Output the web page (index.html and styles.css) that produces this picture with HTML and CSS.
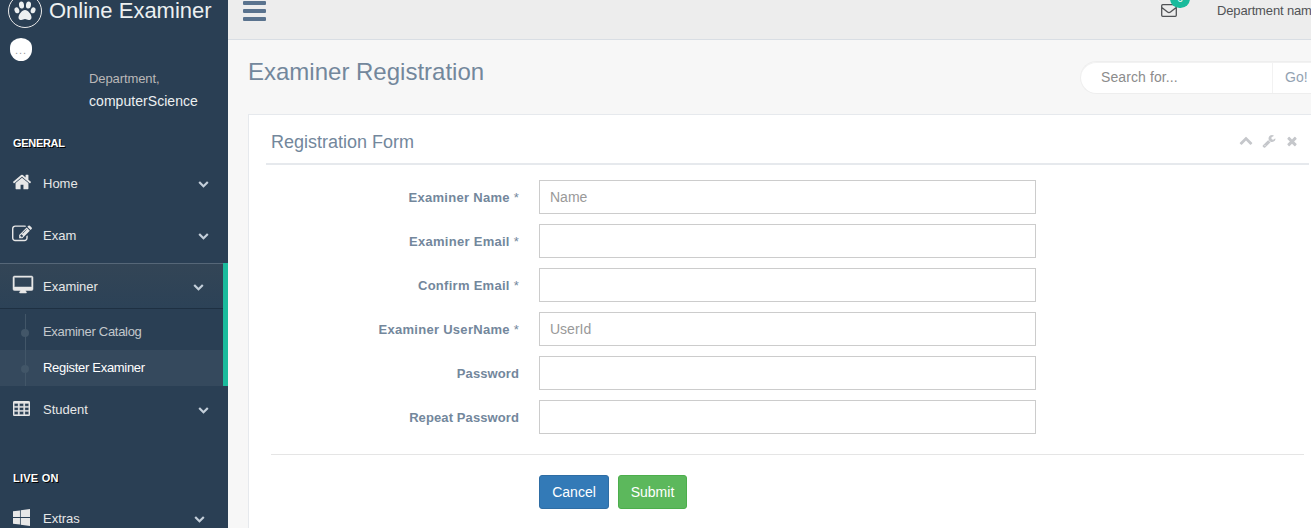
FILE: index.html
```html
<!DOCTYPE html>
<html lang="en">
<head>
<meta charset="utf-8">
<title>Online Examiner</title>
<link rel="stylesheet" href="styles.css">
</head>
<body>
<svg class="defs" aria-hidden="true">
  <symbol id="chevron" viewBox="0 0 1792 1792"><path d="M1683 808l-742 741q-19 19-45 19t-45-19l-742-741q-19-19-19-45.500t19-45.500l166-165q19-19 45-19t45 19l531 531 531-531q19-19 45-19t45 19l166 165q19 19 19 45.500t-19 45.500z"/></symbol>
</svg>
<div class="app">
  <aside class="sidebar">
    <div class="brand">
      <span class="brand-icon"><svg viewBox="0 0 22 20"><ellipse cx="7.500" cy="4" rx="2.500" ry="3.600" transform="rotate(-8 7.500 4)"/><ellipse cx="14.500" cy="4" rx="2.500" ry="3.600" transform="rotate(8 14.500 4)"/><ellipse cx="2.900" cy="9.300" rx="2.300" ry="3.100" transform="rotate(-22 2.900 9.300)"/><ellipse cx="19.100" cy="9.300" rx="2.300" ry="3.100" transform="rotate(22 19.100 9.300)"/><path d="M11 9c-3 0-6.500 4.500-6.500 7.500 0 2 1.500 2.500 2.800 2.500 1.500 0 2.400-.9 3.700-.9s2.200.9 3.700.9c1.300 0 2.800-.5 2.800-2.500C17.500 13.500 14 9 11 9z"/></svg></span>
      <span class="brand-name">Online Examiner</span>
    </div>
    <div class="profile">
      <span class="avatar">...</span>
      <div class="profile-info">
        <span>Department,</span>
        <strong>computerScience</strong>
      </div>
    </div>
    <h3 class="section-title">GENERAL</h3>
    <nav class="menu">
      <a class="item"><svg class="icon" viewBox="0 0 1792 1792"><path d="M1472 992v480q0 26-19 45t-45 19h-384v-384h-256v384h-384q-26 0-45-19t-19-45v-480q0-1 .5-3t.5-3l575-474 575 474q1 2 1 6zm223-69l-62 74q-8 9-21 11h-3q-13 0-21-7l-692-577-692 577q-12 8-24 7-13-2-21-11l-62-74q-8-10-7-23.500t11-21.500l719-599q32-26 76-26t76 26l244 204v-195q0-14 9-23t23-9h192q14 0 23 9t9 23v408l219 182q10 8 11 21.500t-7 23.500z"/></svg><span>Home</span><svg class="chev"><use href="#chevron"/></svg></a>
      <a class="item"><svg class="icon" viewBox="0 0 1792 1792"><path d="M888 1184l116-116-152-152-116 116v56h96v96h56zm440-720q-16-16-33 1l-350 350q-17 17-1 33t33-1l350-350q17-17 1-33zm80 594v190q0 119-84.500 203.500t-203.500 84.500h-832q-119 0-203.500-84.500t-84.500-203.500v-832q0-119 84.500-203.500t203.500-84.500h832q63 0 117 25 15 7 18 23 3 17-9 29l-49 49q-14 14-32 8-23-6-45-6h-832q-66 0-113 47t-47 113v832q0 66 47 113t113 47h832q66 0 113-47t47-113v-126q0-13 9-22l64-64q15-15 35-7t20 29zm-96-738l288 288-672 672h-288v-288zm444 132l-92 92-288-288 92-92q28-28 68-28t68 28l152 152q28 28 28 68t-28 68z"/></svg><span>Exam</span><svg class="chev"><use href="#chevron"/></svg></a>
      <div class="group">
        <a class="item open"><svg class="icon desktop" viewBox="0 0 20 18"><path fill-rule="evenodd" d="M1.500 0h17Q20 0 20 1.500v11.500q0 1.500-1.500 1.500H12.700q0 1 .8 1.700.3.800-.6.800H7.100q-.9 0-.6-.8.800-.7.800-1.700H1.500Q0 14.500 0 13V1.500Q0 0 1.500 0zM1.800 1.300q-.5 0-.5.500v8.700q0 .5.500.5h16.400q.5 0 .5-.5V1.800q0-.5-.5-.5z"/></svg><span>Examiner</span><svg class="chev"><use href="#chevron"/></svg></a>
        <ul class="submenu">
          <li>Examiner Catalog</li>
          <li class="current">Register Examiner</li>
        </ul>
      </div>
      <a class="item student"><svg class="icon table" viewBox="0 0 17 15"><path fill-rule="evenodd" d="M1.500 0h14Q17 0 17 1.500v12q0 1.500-1.500 1.500h-14Q0 15 0 13.500v-12Q0 0 1.500 0zM1.300 2.500v2.700h3.800V2.500zm5.200 0v2.700h4V2.500zm5.400 0v2.700h3.800V2.500zM1.300 6.500v2.800h3.800V6.500zm5.200 0v2.800h4V6.500zm5.400 0v2.800h3.800V6.500zM1.300 10.600v2.800h3.800v-2.800zm5.200 0v2.800h4v-2.800zm5.400 0v2.800h3.800v-2.800z"/></svg><span>Student</span><svg class="chev"><use href="#chevron"/></svg></a>
    </nav>
    <h3 class="section-title live">LIVE ON</h3>
    <nav class="menu">
      <a class="item extras"><svg class="icon windows" viewBox="64 128 1664 1664"><path d="M746 1006v651l-682-94v-557h682zm0-743v659h-682v-565zm982 743v786l-907-125v-661h907zm0-878v794h-907v-669z"/></svg><span>Extras</span><svg class="chev"><use href="#chevron"/></svg></a>
    </nav>
  </aside>
  <main class="content">
    <header class="topbar">
      <span class="burger"><i></i><i></i><i></i></span>
      <span class="mail"><svg viewBox="0 0 16 13"><path d="M1.700.7h12.600q1 0 1 1v9.600q0 1-1 1H1.700q-1 0-1-1V1.700q0-1 1-1zM.8 3.500L6.500 8Q8 9.200 9.500 8l5.700-4.500"/></svg><b class="badge">6</b></span>
      <span class="user">Department name</span>
    </header>
    <div class="page-head">
      <h1>Examiner Registration</h1>
      <div class="search"><span class="query">Search for...</span><span class="go">Go!</span></div>
    </div>
    <section class="panel">
      <div class="panel-head">
        <h2>Registration Form</h2>
        <span class="tools">
          <svg class="collapse"><use href="#chevron"/></svg>
          <svg viewBox="0 0 1792 1792"><path d="M448 1472q0-26-19-45t-45-19-45 19-19 45 19 45 45 19 45-19 19-45zm644-420l-682 682q-37 37-90 37-52 0-91-37l-106-108q-38-36-38-90 0-53 38-91l681-681q39 98 114.500 173.500t173.500 114.500zm634-435q0 39-23 106-47 134-164.500 217.500t-258.500 83.500q-185 0-316.500-131.500t-131.500-316.500 131.500-316.500 316.500-131.500q58 0 121.500 16.500t107.500 46.500q16 11 16 28t-16 28l-293 169v224l193 107q5-3 79-48.500t135.500-81 70.500-35.500q15 0 23.500 10t8.500 25z"/></svg>
          <svg viewBox="0 0 1792 1792"><path d="M1490 1322q0 40-28 68l-136 136q-28 28-68 28t-68-28l-294-294-294 294q-28 28-68 28t-68-28l-136-136q-28-28-28-68t28-68l294-294-294-294q-28-28-28-68t28-68l136-136q28-28 68-28t68 28l294 294 294-294q28-28 68-28t68 28l136 136q28 28 28 68t-28 68l-294 294 294 294q28 28 28 68z"/></svg>
        </span>
      </div>
      <form class="form">
        <label class="required" for="name">Examiner Name <em>*</em></label><input id="name" type="text" placeholder="Name">
        <label class="required" for="email">Examiner Email <em>*</em></label><input id="email" type="text">
        <label class="required" for="email2">Confirm Email <em>*</em></label><input id="email2" type="text">
        <label class="required" for="userid">Examiner UserName <em>*</em></label><input id="userid" type="text" placeholder="UserId">
        <label for="pass">Password</label><input id="pass" type="password">
        <label for="pass2">Repeat Password</label><input id="pass2" type="password">
      </form>
      <div class="actions"><button class="btn cancel" type="button">Cancel</button><button class="btn submit" type="button">Submit</button></div>
    </section>
  </main>
</div>
</body>
</html>
```
FILE: styles.css
```css
* { box-sizing: border-box; }
html, body { margin: 0; height: 528px; overflow: hidden; }
body { font: 13px/18px "Liberation Sans", Arial, sans-serif; color: #73879c; background: #f7f7f7; }
h1, h2, h3, ul { margin: 0; padding: 0; font-weight: normal; list-style: none; }
svg { display: block; fill: currentColor; flex: none; }
.defs { display: none; }
.app { display: flex; height: 528px; }

.sidebar { width: 228px; flex: none; background: #2a3f54; color: #e7e7e7; overflow: hidden; }
.brand { display: flex; align-items: center; height: 34px; margin-top: -6px; padding-left: 8px; gap: 7px; color: #ecf0f1; }
.brand-icon { width: 34px; height: 34px; border: 1px solid #eaeaea; border-radius: 50%; display: grid; place-items: center; flex: none; }
.brand-icon svg { width: 22px; height: 20px; }
.brand-name { font-size: 22px; line-height: 22px; white-space: nowrap; }
.profile { height: 101px; padding: 10px 0 0 10px; display: flex; }
.avatar { width: 22px; height: 23px; border-radius: 50% / 42% 42% 50% 50%; background: #fff; color: #999; font-size: 11px; line-height: 24px; text-align: center; letter-spacing: 1px; flex: none; }
.profile-info { padding: 32px 0 0 57px; display: flex; flex-direction: column; }
.profile-info span { color: #bab8b8; line-height: 18px; letter-spacing: -.1px; }
.profile-info strong { color: #ecf0f1; font-size: 14px; font-weight: normal; line-height: 18px; margin-top: 4px; letter-spacing: .05px; }
.section-title { height: 28px; padding-left: 13px; font-size: 11px; font-weight: bold; line-height: 28px; letter-spacing: -.3px; color: #fff; text-shadow: 1px 1px #000; }
.item { display: flex; align-items: center; height: 52px; padding: 0 19px 0 12px; }
.item span { flex: 1; padding-top: 2px; }
.icon { width: 20px; height: 20px; margin-right: 11px; position: relative; top: -1px; }
.chev { width: 11px; height: 11px; color: #c4cfda; }
.group { border-right: 5px solid #1abb9c; margin-top: 2px; }
.item.open { height: 46px; border-top: 1px solid #566778; border-bottom: 1px solid #1e3042; background: linear-gradient(#334556, #2c4257); }
.submenu { padding-top: 5px; background: linear-gradient(90deg, transparent 25px, #425668 25px, #425668 26px, transparent 26px) 0 5px no-repeat; }
.submenu li { height: 36px; line-height: 36px; padding-left: 43px; color: #c3c8cc; position: relative; letter-spacing: -.3px; }
.submenu li::before { content: ""; position: absolute; left: 21px; top: 15px; width: 8px; height: 8px; border-radius: 50%; background: #425668; }
.submenu .current { color: #fff; background: linear-gradient(90deg, transparent 25px, #425668 25px, #425668 26px, transparent 26px), #35495d; }
.desktop { width: 20px; height: 18px; margin: 0 10px 0 1px; stroke: currentColor; stroke-width: .5; overflow: visible; }
.table { width: 17px; height: 15px; margin: 0 13px 0 1px; stroke: currentColor; stroke-width: .3; }
.student { height: 46px; }
.live { margin-top: 32px; letter-spacing: .25px; }
.windows { width: 17px; height: 17px; margin: 0 13px 0 1px; top: -1px; }
.extras { padding-right: 23px; }

.content { flex: 1; min-width: 0; overflow: hidden; }
.topbar { height: 40px; display: flex; background: #ededed; border-bottom: 1px solid #d9dee4; padding-left: 15px; color: #515356; }
.burger { display: flex; flex: none; flex-direction: column; gap: 4px; padding-top: 1px; width: 23px; }
.burger i { height: 4px; border-radius: 1px; background: #5a738e; }
.mail { position: relative; flex: none; margin-left: 895px; padding-top: 4px; }
.mail svg { width: 16px; height: 13px; fill: none; stroke: currentColor; stroke-width: 1.300; }
.badge { position: absolute; left: 9px; top: -11px; width: 20px; height: 19px; border-radius: 10px; background: #1abb9c; color: #fff; font-size: 10px; line-height: 20px; text-align: center; font-weight: normal; }
.user { flex: none; margin-left: 40px; padding-top: 2px; white-space: nowrap; letter-spacing: -.15px; }
.page-head { height: 74px; display: flex; justify-content: space-between; padding: 17px 0 0 20px; }
h1 { font-size: 24px; line-height: 30px; }
.search { display: flex; width: 231px; height: 33px; margin-top: 4px; flex: none; border: 1px solid #eee; border-right: 0; border-radius: 17px 0 0 17px; background: #fff; box-shadow: inset 0 1px #f2f2f2; font-size: 14px; line-height: 31px; color: #8c8c8c; white-space: nowrap; }
.search .query { width: 192px; padding-left: 20px; border-right: 1px solid #f2f2f2; letter-spacing: .1px; }
.search .go { padding-left: 12px; color: #93a2b2; }
.panel { height: 420px; margin-left: 20px; padding: 10px 0 0 17px; background: #fff; border: 1px solid #e6e9ed; border-right: 0; }
.panel-head { display: flex; justify-content: space-between; height: 40px; width: 1043px; padding: 0 10px 0 5px; border-bottom: 2px solid #e6e9ed; }
h2 { font-size: 18px; line-height: 34px; }
.tools { display: flex; gap: 9px; padding-top: 9px; color: #c5c7cb; }
.tools svg { width: 14px; height: 14px; }
.tools .collapse { transform: translateY(1px) rotate(180deg); }
.form { display: grid; grid-template-columns: 248px 497px; column-gap: 20px; row-gap: 10px; margin-left: 5px; padding: 15px 0 20px; width: 1033px; border-bottom: 1px solid #e5e5e5; }
.form label { height: 34px; text-align: right; font-weight: bold; line-height: 35px; letter-spacing: .1px; }
.form .required { letter-spacing: .28px; }
.form em { font-style: normal; font-weight: normal; }
.form input { width: 497px; height: 34px; padding: 6px 10px; border: 1px solid #ccc; border-radius: 0; background: #fff; font: 14px/20px "Liberation Sans", Arial, sans-serif; color: #555; }
.form input::placeholder { color: #999; opacity: 1; }
.actions { display: flex; gap: 9px; padding: 20px 0 0 273px; }
.btn { height: 34px; padding: 0; border: 1px solid; border-radius: 3px; color: #fff; font: 14px/20px "Liberation Sans", Arial, sans-serif; }
.cancel { width: 70px; background: #337ab7; border-color: #2e6da4; }
.submit { width: 69px; background: #5cb85c; border-color: #4cae4c; }
```
